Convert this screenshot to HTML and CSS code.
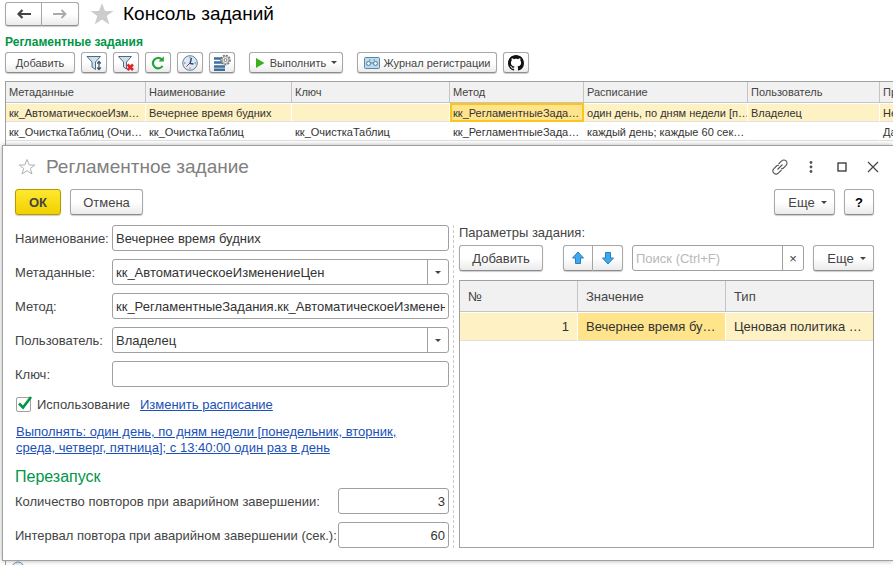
FILE: index.html
```html
<!DOCTYPE html>
<html lang="ru">
<head>
  <meta charset="UTF-8">
  <meta name="viewport" content="width=device-width, initial-scale=1.0">
  <title>Консоль заданий</title>
  <link rel="stylesheet" href="styles.css">
</head>
<body>
  <main class="console">
    <header class="console-header">
      <div class="history">
        <button type="button" class="btn" aria-label="Назад">
          <svg width="16" height="12" viewBox="0 0 16 12"><path d="M2 6H15M6.500 2L2.500 6L6.500 10" fill="none" stroke="#444" stroke-width="2.200"/></svg>
        </button>
        <button type="button" class="btn" aria-label="Вперед">
          <svg width="16" height="12" viewBox="0 0 16 12"><path d="M1 6H14M9.500 2L13.500 6L9.500 10" fill="none" stroke="#aaa" stroke-width="1.800"/></svg>
        </button>
      </div>
      <svg class="star" width="24" height="24" viewBox="0 0 24 24"><path d="M12 1L15 9H23.500L16.700 14L19.300 22.500L12 17.500L4.700 22.500L7.300 14L.5 9H9Z" fill="#ccc"/></svg>
      <h1>Консоль заданий</h1>
    </header>

    <h2>Регламентные задания</h2>

    <div class="toolbar">
      <button type="button" class="btn btn-add">Добавить</button>
      <button type="button" class="btn btn-icon" aria-label="Отбор">
        <svg width="18" height="18" viewBox="0 0 18 18"><path d="M2 2.500H15.500L10.500 8V15.500L7 13V8Z" fill="#cfe0ec" stroke="#4d6c84"/><path d="M14 8V15M12.200 9.500L14 7.500L15.800 9.500M12.200 13.500L14 15.500L15.800 13.500" fill="none" stroke="#35506a" stroke-width="1.200"/></svg>
      </button>
      <button type="button" class="btn btn-icon" aria-label="Отключить отбор">
        <svg width="18" height="18" viewBox="0 0 18 18"><path d="M1.500 2.500H14.500L9.500 8V15L6.500 13V8Z" fill="#cfe0ec" stroke="#4d6c84"/><path d="M10.500 10.500L16 16M16 10.500L10.500 16" stroke="#e0252b" stroke-width="2.600"/></svg>
      </button>
      <button type="button" class="btn btn-icon" aria-label="Обновить">
        <svg width="18" height="18" viewBox="0 0 18 18"><path d="M13.500 12A5.200 5.200 0 1 1 12.500 5.200" fill="none" stroke="#27a33a" stroke-width="2.200"/><path d="M9.500 7.500H14.800V2.200Z" fill="#27a33a"/></svg>
      </button>
      <button type="button" class="btn btn-icon" aria-label="Расписание">
        <svg width="18" height="18" viewBox="0 0 18 18"><circle cx="9" cy="9" r="7.300" fill="#dceaf4" stroke="#5f7e96"/><path d="M9 3V4.500M9 13.500V15M3 9H4.500M13.500 9H15" stroke="#5f7e96"/><path d="M10.500 4L9 9.500L12.500 10" fill="none" stroke="#274b6d" stroke-width="1.400"/><path d="M9 9L5.500 12.500" stroke="#d22"/></svg>
      </button>
      <button type="button" class="btn btn-icon" aria-label="Настройки">
        <svg width="18" height="18" viewBox="0 0 18 18"><path d="M1 4.500H10M1 8.500H12M1 12.500H12M1 15.800H12" stroke="#3c6f9f" stroke-width="2.600"/><circle cx="12.500" cy="6" r="4.500" fill="#eee" stroke="#777" stroke-dasharray="2 1" stroke-width="1.600"/><circle cx="12.500" cy="6" r="3.500" fill="#f4f4f4" stroke="#999"/><circle cx="12.500" cy="6" r="1.500" fill="#fff" stroke="#777"/></svg>
      </button>
      <button type="button" class="btn btn-run">
        <svg width="10" height="12" viewBox="0 0 10 12"><path d="M1 1L9.500 6L1 11Z" fill="#3cb01e"/></svg>
        Выполнить
        <span class="caret"></span>
      </button>
      <button type="button" class="btn btn-log">
        <svg width="16" height="12" viewBox="0 0 16 12"><rect x=".5" y=".5" width="15" height="11" rx="1" fill="#b9dbf0" stroke="#5c87a6"/><circle cx="4.500" cy="6.500" r="2" fill="#e8f3fa" stroke="#55788f"/><circle cx="11.500" cy="6.500" r="2" fill="#e8f3fa" stroke="#55788f"/><path d="M6.500 6H9.500M5 3H6.500M9.500 3H11" stroke="#55788f"/></svg>
        Журнал регистрации
      </button>
      <button type="button" class="btn btn-icon" aria-label="GitHub">
        <svg width="16" height="16" viewBox="0 0 16 16"><path d="M8 0C3.580 0 0 3.580 0 8c0 3.540 2.290 6.530 5.470 7.590.4.070.55-.17.55-.38 0-.19-.01-.82-.01-1.490-2.010.37-2.530-.49-2.690-.94-.09-.23-.48-.94-.82-1.130-.28-.15-.68-.52-.01-.53.63-.01 1.080.58 1.230.82.720 1.210 1.870.87 2.330.66.070-.52.280-.87.510-1.070-1.780-.2-3.640-.89-3.640-3.950 0-.87.310-1.590.82-2.150-.08-.2-.36-1.020.08-2.120 0 0 .67-.21 2.200.82.640-.18 1.320-.27 2-.27s1.360.09 2 .27c1.530-1.040 2.200-.82 2.200-.82.440 1.100.160 1.920.08 2.120.51.56.82 1.270.82 2.150 0 3.070-1.870 3.750-3.650 3.950.29.25.54.73.54 1.480 0 1.070-.01 1.930-.01 2.200 0 .21.150.46.55.38A8.010 8.010 0 0 0 16 8c0-4.420-3.580-8-8-8Z" fill="#111"/></svg>
      </button>
    </div>

    <div class="jobs-wrap">
      <table class="jobs">
        <colgroup>
          <col class="col-meta"><col class="col-name"><col class="col-key"><col class="col-method"><col class="col-schedule"><col class="col-user"><col>
        </colgroup>
        <thead>
          <tr><th>Метаданные</th><th>Наименование</th><th>Ключ</th><th>Метод</th><th>Расписание</th><th>Пользователь</th><th>Пр</th></tr>
        </thead>
        <tbody>
          <tr class="selected"><td>кк_АвтоматическоеИзм…</td><td>Вечернее время будних</td><td></td><td class="current">кк_РегламентныеЗада…</td><td>один день, по дням недели [п…</td><td>Владелец</td><td>Не</td></tr>
          <tr><td>кк_ОчисткаТаблиц (Очи…</td><td>кк_ОчисткаТаблиц</td><td>кк_ОчисткаТаблиц</td><td>кк_РегламентныеЗада…</td><td>каждый день; каждые 60 сек…</td><td></td><td>Да</td></tr>
        </tbody>
      </table>
      <svg class="status" width="14" height="14" viewBox="0 0 14 14"><circle cx="7" cy="7" r="6" fill="#e6edf5" stroke="#6d8fb8"/></svg>
    </div>
  </main>

  <section class="dialog" role="dialog" aria-labelledby="dialog-title">
    <header class="dialog-header">
      <svg width="18" height="18" viewBox="0 0 18 18"><path d="M9 1.500L11.200 7H16.800L12.300 10.500L14 16L9 12.700L4 16L5.700 10.500L1.200 7H6.800Z" fill="none" stroke="#b0b0b0"/></svg>
      <h2 id="dialog-title">Регламентное задание</h2>
      <div class="window-buttons">
        <button type="button" aria-label="Ссылка">
          <svg width="16" height="16" viewBox="0 0 16 16" fill="none" stroke="#555" stroke-width="1.100"><path d="M6.500 5L9.700 1.900A3.100 3.100 0 0 1 14.100 6.300L11.500 9C10.800 9.700 10 9.900 9 9.800M9.500 11L6.300 14.100A3.100 3.100 0 0 1 1.900 9.700L4.500 7C5.200 6.300 6 6.100 7 6.200M5.500 10.500L10.500 5.500"/></svg>
        </button>
        <button type="button" aria-label="Меню">
          <svg width="16" height="16" viewBox="0 0 16 16" fill="#555"><circle cx="8" cy="3.500" r="1.400"/><circle cx="8" cy="8" r="1.400"/><circle cx="8" cy="12.500" r="1.400"/></svg>
        </button>
        <button type="button" aria-label="Развернуть">
          <svg width="16" height="16" viewBox="0 0 16 16"><rect x="4" y="4" width="8" height="8" fill="none" stroke="#222" stroke-width="1.200"/></svg>
        </button>
        <button type="button" aria-label="Закрыть">
          <svg width="16" height="16" viewBox="0 0 16 16"><path d="M3 3L13 13M13 3L3 13" stroke="#444" stroke-width="1.200"/></svg>
        </button>
      </div>
    </header>

    <div class="commands">
      <button type="button" class="btn btn-ok">ОК</button>
      <button type="button" class="btn btn-cancel">Отмена</button>
      <button type="button" class="btn btn-more push">Еще <span class="caret"></span></button>
      <button type="button" class="btn btn-help">?</button>
    </div>

    <div class="dialog-body">
      <form class="props">
        <div class="row">
          <label for="name">Наименование:</label>
          <div class="field"><input type="text" id="name" value="Вечернее время будних"></div>
        </div>
        <div class="row">
          <label for="meta">Метаданные:</label>
          <div class="field"><input type="text" id="meta" value="кк_АвтоматическоеИзменениеЦен"><button type="button" aria-label="Выбрать"><span class="caret"></span></button></div>
        </div>
        <div class="row">
          <label for="method">Метод:</label>
          <div class="field"><input type="text" id="method" value="кк_РегламентныеЗадания.кк_АвтоматическоеИзменениеЦен"></div>
        </div>
        <div class="row">
          <label for="user">Пользователь:</label>
          <div class="field"><input type="text" id="user" value="Владелец"><button type="button" aria-label="Выбрать"><span class="caret"></span></button></div>
        </div>
        <div class="row">
          <label for="key">Ключ:</label>
          <div class="field"><input type="text" id="key"></div>
        </div>

        <div class="usage">
          <span class="check">
            <input type="checkbox" id="use" checked>
            <svg width="18" height="18" viewBox="0 0 18 18"><path d="M4 8.500L8 12.500L16 2" fill="none" stroke="#009646" stroke-width="2.600"/></svg>
          </span>
          <label for="use">Использование</label>
          <a href="#">Изменить расписание</a>
        </div>
        <a href="#" class="schedule">Выполнять: один день, по дням недели [понедельник, вторник,<br>среда, четверг, пятница]; с 13:40:00 один раз в день</a>

        <h3>Перезапуск</h3>
        <div class="row number">
          <label for="count">Количество повторов при аварийном завершении:</label>
          <div class="field"><input type="text" id="count" value="3"></div>
        </div>
        <div class="row number">
          <label for="interval">Интервал повтора при аварийном завершении (сек.):</label>
          <div class="field"><input type="text" id="interval" value="60"></div>
        </div>
      </form>

      <div class="params">
        <h4>Параметры задания:</h4>
        <div class="params-bar">
          <button type="button" class="btn btn-add-param">Добавить</button>
          <div class="move">
            <button type="button" class="btn" aria-label="Вверх">
              <svg width="14" height="14" viewBox="0 0 14 14"><path d="M7 1L12.500 7H9.500V12.500H4.500V7H1.500Z" fill="#3fa9f0" stroke="#2b7fb8"/></svg>
            </button>
            <button type="button" class="btn" aria-label="Вниз">
              <svg width="14" height="14" viewBox="0 0 14 14"><path d="M7 13L12.500 7H9.500V1.500H4.500V7H1.500Z" fill="#3fa9f0" stroke="#2b7fb8"/></svg>
            </button>
          </div>
          <div class="field search"><input type="text" placeholder="Поиск (Ctrl+F)" aria-label="Поиск"><button type="button" aria-label="Очистить">×</button></div>
          <button type="button" class="btn btn-more">Еще <span class="caret"></span></button>
        </div>
        <div class="values-wrap">
          <table class="values">
            <colgroup><col class="col-num"><col class="col-value"><col></colgroup>
            <thead>
              <tr><th>№</th><th>Значение</th><th>Тип</th></tr>
            </thead>
            <tbody>
              <tr class="selected"><td class="num">1</td><td class="current">Вечернее время бу…</td><td>Ценовая политика …</td></tr>
            </tbody>
          </table>
        </div>
      </div>
    </div>
  </section>
</body>
</html>
```
FILE: styles.css
```css
* {
  box-sizing: border-box;
}

body {
  margin: 0;
  background: #fff;
  color: #444;
  font-family: "Liberation Sans", Arial, sans-serif;
  font-size: 13px;
  overflow: hidden;
}

h1, h2, h3, h4 {
  margin: 0;
  font-weight: normal;
}

button, input {
  font: inherit;
  color: inherit;
}

svg {
  display: block;
  flex: none;
}

a {
  color: #1a50b8;
}

/* Buttons */
.btn {
  display: flex;
  align-items: center;
  justify-content: center;
  height: 26px;
  padding: 0;
  border: 1px solid #a8a8a8;
  border-bottom-color: #8c8c8c;
  border-radius: 3px;
  background: linear-gradient(#fff 50%, #ebebeb);
  box-shadow: 0 1px 1px rgba(0, 0, 0, 0.2);
  white-space: nowrap;
}

.caret {
  border: 3px solid transparent;
  border-top-color: #444;
  border-bottom: 0;
}

/* Console window */
.console {
  display: flex;
  flex-direction: column;
  height: 100vh;
  padding-left: 5px;
  font-size: 11px;
}

.console-header {
  display: flex;
  align-items: center;
  height: 26px;
  padding-top: 1px;
}

.history {
  display: flex;
}

.history .btn {
  width: 37px;
  height: 24px;
}

.history .btn:first-child {
  border-radius: 3px 0 0 3px;
}

.history .btn:last-child {
  border-left: 0;
  border-radius: 0 3px 3px 0;
}

.star {
  margin: 0 9px 0 11px;
}

h1 {
  color: #000;
  font-size: 19px;
}

.console > h2 {
  margin-top: 8px;
  color: #009646;
  font-size: 12px;
  font-weight: bold;
  line-height: 16px;
}

.toolbar {
  display: flex;
  gap: 6px;
  margin-top: 2px;
}

.toolbar .btn {
  height: 21px;
}

.btn-add {
  width: 70px;
}

.btn-icon {
  width: 26px;
}

.btn-run {
  gap: 5px;
  width: 94px;
  margin: 0 8px;
}

.btn-log {
  gap: 4px;
  width: 140px;
}

.jobs-wrap {
  flex: 1;
  display: flex;
  flex-direction: column;
  justify-content: space-between;
  margin-top: 8px;
  border: 1px solid #a0a0a0;
  border-width: 1px 0 0 1px;
}

table {
  width: 100%;
  border-collapse: separate;
  border-spacing: 0;
  table-layout: fixed;
}

th, td {
  overflow: hidden;
  text-align: left;
  white-space: nowrap;
}

th {
  border-right: 1px solid #c4c4c4;
  border-bottom: 1px solid #c4c4c4;
  background: #f1f1f1;
  font-weight: normal;
}

td {
  border-top: 1px solid #fff;
  border-right: 1px solid #fff;
  border-bottom: 1px solid #e0e0e0;
  color: #333;
}

th:last-child, td:last-child {
  border-right: 0;
}

.selected td {
  background: #fef2c4;
}

.selected .current {
  background: #ffe48c;
}

.jobs th, .jobs td {
  height: 19px;
  padding: 0 0 0 3px;
}

.jobs th {
  height: 21px;
}

.jobs .current {
  outline: 2px solid #fbc51d;
  outline-offset: -2px;
}

.col-meta { width: 140px; }
.col-name { width: 146px; }
.col-key { width: 158px; }
.col-method { width: 134px; }
.col-schedule { width: 164px; }
.col-user { width: 132px; }

.status {
  margin: 0 0 -10px 5px;
}

/* Dialog */
.dialog {
  position: absolute;
  top: 145px;
  right: 0;
  bottom: 4px;
  left: 2px;
  display: flex;
  flex-direction: column;
  padding: 10px 19px 12px 12px;
  border: 1px solid #a0a0a0;
  border-right: 0;
  background: #fff;
  box-shadow: 0 0 5px rgba(0, 0, 0, 0.3);
}

.dialog-header {
  display: flex;
  align-items: center;
  gap: 10px;
  height: 22px;
  padding-left: 3px;
}

.dialog-header h2 {
  color: #808080;
  font-size: 19px;
}

.window-buttons {
  display: flex;
  gap: 15px;
  margin: 0 -7px 0 auto;
}

.window-buttons button {
  padding: 0;
  border: 0;
  background: none;
}

.commands {
  display: flex;
  gap: 9px;
  margin-top: 11px;
}

.btn-ok {
  width: 46px;
  border-color: #b39b00;
  background: linear-gradient(#ffe82e, #f2d000);
  font-weight: bold;
}

.btn-cancel {
  width: 73px;
}

.btn-more {
  gap: 6px;
  width: 61px;
  padding-left: 6px;
}

.btn-help {
  width: 30px;
  color: #000;
  font-weight: bold;
}

.push {
  margin-left: auto;
}

.dialog-body {
  flex: 1;
  display: flex;
  margin-top: 10px;
}

.props {
  width: 439px;
  padding-right: 4px;
  border-right: 1px dashed #ccc;
}

.row {
  display: flex;
  align-items: center;
  margin-bottom: 8px;
}

.row label {
  flex: none;
  width: 97px;
}

.row.number label {
  width: 323px;
}

.row.number input {
  text-align: right;
}

.field {
  flex: 1;
  display: flex;
  height: 26px;
  border: 1px solid #a0a0a0;
  border-radius: 3px;
  background: #fff;
  overflow: hidden;
}

.field input {
  flex: 1;
  min-width: 0;
  padding: 0 3px;
  border: 0;
  outline: 0;
  background: none;
  color: #333;
}

.field button {
  display: flex;
  align-items: center;
  justify-content: center;
  width: 21px;
  padding: 0;
  border: 0;
  border-left: 1px solid #a0a0a0;
  background: none;
}

.usage {
  display: flex;
  align-items: center;
  height: 20px;
  margin-top: -1px;
}

.usage a {
  margin-left: 10px;
}

.check {
  display: grid;
  margin-right: 4px;
}

.check input, .check svg {
  grid-area: 1 / 1;
}

.check input {
  appearance: none;
  width: 15px;
  height: 15px;
  margin: 2px 0 0 1px;
  border: 1px solid #a0a0a0;
  border-radius: 2px;
}

.check svg {
  pointer-events: none;
}

.schedule {
  display: block;
  margin: 10px 0 0 1px;
  line-height: 16px;
}

h3 {
  margin: 11px 0 1px;
  color: #009646;
  font-size: 16px;
  line-height: 20px;
}

.row:last-child {
  margin-bottom: 0;
}

/* Parameters */
.params {
  flex: 1;
  display: flex;
  flex-direction: column;
  min-width: 0;
  padding-left: 5px;
}

h4 {
  font-size: 13px;
  line-height: 16px;
}

.params-bar {
  display: flex;
  margin: 4px 0 9px;
}

.btn-add-param {
  width: 84px;
}

.move {
  display: flex;
  margin: 0 9px 0 20px;
}

.move .btn {
  width: 30px;
}

.move .btn:first-child {
  border-radius: 3px 0 0 3px;
}

.move .btn:last-child {
  border-left: 0;
  border-radius: 0 3px 3px 0;
}

.search {
  margin-right: 9px;
}

.search input::placeholder {
  color: #b8b8b8;
  opacity: 1;
}

.values-wrap {
  flex: 1;
  border: 1px solid #a0a0a0;
}

.values th, .values td {
  height: 29px;
  padding: 0 8px;
}

.values th {
  height: 31px;
}

.values .num {
  text-align: right;
}

.col-num { width: 118px; }
.col-value { width: 148px; }
```
